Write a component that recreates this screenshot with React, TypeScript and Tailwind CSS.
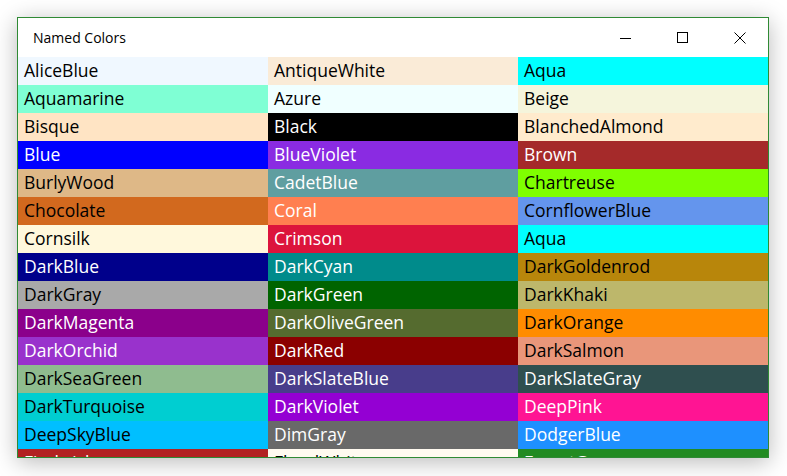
const colors: { name: string; hex: string; light: boolean }[] = [
  { name: "AliceBlue", hex: "#F0F8FF", light: false },
  { name: "AntiqueWhite", hex: "#FAEBD7", light: false },
  { name: "Aqua", hex: "#00FFFF", light: false },
  { name: "Aquamarine", hex: "#7FFFD4", light: false },
  { name: "Azure", hex: "#F0FFFF", light: false },
  { name: "Beige", hex: "#F5F5DC", light: false },
  { name: "Bisque", hex: "#FFE4C4", light: false },
  { name: "Black", hex: "#000000", light: true },
  { name: "BlanchedAlmond", hex: "#FFEBCD", light: false },
  { name: "Blue", hex: "#0000FF", light: true },
  { name: "BlueViolet", hex: "#8A2BE2", light: true },
  { name: "Brown", hex: "#A52A2A", light: true },
  { name: "BurlyWood", hex: "#DEB887", light: false },
  { name: "CadetBlue", hex: "#5F9EA0", light: true },
  { name: "Chartreuse", hex: "#7FFF00", light: false },
  { name: "Chocolate", hex: "#D2691E", light: false },
  { name: "Coral", hex: "#FF7F50", light: true },
  { name: "CornflowerBlue", hex: "#6495ED", light: false },
  { name: "Cornsilk", hex: "#FFF8DC", light: false },
  { name: "Crimson", hex: "#DC143C", light: true },
  { name: "Aqua", hex: "#00FFFF", light: false },
  { name: "DarkBlue", hex: "#00008B", light: true },
  { name: "DarkCyan", hex: "#008B8B", light: true },
  { name: "DarkGoldenrod", hex: "#B8860B", light: false },
  { name: "DarkGray", hex: "#A9A9A9", light: false },
  { name: "DarkGreen", hex: "#006400", light: true },
  { name: "DarkKhaki", hex: "#BDB76B", light: false },
  { name: "DarkMagenta", hex: "#8B008B", light: true },
  { name: "DarkOliveGreen", hex: "#556B2F", light: true },
  { name: "DarkOrange", hex: "#FF8C00", light: false },
  { name: "DarkOrchid", hex: "#9932CC", light: true },
  { name: "DarkRed", hex: "#8B0000", light: true },
  { name: "DarkSalmon", hex: "#E9967A", light: false },
  { name: "DarkSeaGreen", hex: "#8FBC8F", light: false },
  { name: "DarkSlateBlue", hex: "#483D8B", light: true },
  { name: "DarkSlateGray", hex: "#2F4F4F", light: true },
  { name: "DarkTurquoise", hex: "#00CED1", light: false },
  { name: "DarkViolet", hex: "#9400D3", light: true },
  { name: "DeepPink", hex: "#FF1493", light: true },
  { name: "DeepSkyBlue", hex: "#00BFFF", light: false },
  { name: "DimGray", hex: "#696969", light: true },
  { name: "DodgerBlue", hex: "#1E90FF", light: true },
  { name: "Firebrick", hex: "#B22222", light: true },
  { name: "FloralWhite", hex: "#FFFAF0", light: false },
  { name: "ForestGreen", hex: "#228B22", light: true },
];

function CaptionButton({ children }: { children: React.ReactNode }) {
  return <div className="w-[57px] h-full flex items-center justify-center">{children}</div>;
}

export default function App() {
  return (
    <div className="w-[787px] h-[476px] bg-white pl-[17px] pt-[17px]">
      <div
        className="w-[752px] h-[441px] border border-[#2f8a34] bg-white flex flex-col shadow-[0_4px_22px_rgba(0,0,0,0.28)]"
        style={{ fontFamily: '"Segoe UI", "Open Sans", sans-serif' }}
      >
        {/* Title bar */}
        <div className="h-[39px] flex items-center shrink-0">
          <span className="pl-[15px] text-[14px] text-black flex-1">Named Colors</span>
          <div className="flex h-full">
            <CaptionButton>
              <svg width="12" height="12" viewBox="0 0 12 12">
                <path d="M0 6.5H11" stroke="#000" strokeWidth="1" />
              </svg>
            </CaptionButton>
            <CaptionButton>
              <svg width="12" height="12" viewBox="0 0 12 12">
                <rect x="0.5" y="0.5" width="10" height="10" fill="none" stroke="#000" strokeWidth="1" />
              </svg>
            </CaptionButton>
            <CaptionButton>
              <svg width="12" height="12" viewBox="0 0 12 12">
                <path d="M0.5 0.5L11.5 11.5M11.5 0.5L0.5 11.5" stroke="#000" strokeWidth="1" />
              </svg>
            </CaptionButton>
          </div>
        </div>

        {/* Color grid */}
        <div className="flex-1 overflow-hidden">
          <div className="grid grid-cols-3">
            {colors.map((c, i) => (
              <div
                key={i}
                className={`h-[28px] leading-[26px] pl-[6px] text-[17.5px] whitespace-nowrap ${
                  c.light ? "text-white" : "text-black"
                }`}
                style={{ backgroundColor: c.hex }}
              >
                {c.name}
              </div>
            ))}
          </div>
        </div>
      </div>
    </div>
  );
}
